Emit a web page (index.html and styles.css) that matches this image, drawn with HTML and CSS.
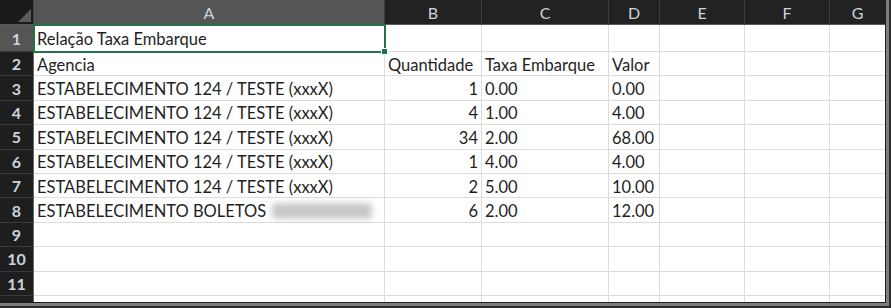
FILE: index.html
```html
<!DOCTYPE html>
<html lang="pt">
<head>
  <meta charset="UTF-8" />
  <title>Relação Taxa Embarque</title>
  <link rel="stylesheet" href="styles.css">
</head>
<body>

<div class="window">
  <div class="sheet" id="sheet">
    <!-- column headers -->
    <div class="corner">
      <svg width="34" height="25" viewBox="0 0 34 25"><polygon points="31,9 31,22 18,22" fill="#5c5c5c"/></svg>
    </div>
    <div class="col-head active">A</div>
    <div class="col-head">B</div>
    <div class="col-head">C</div>
    <div class="col-head">D</div>
    <div class="col-head">E</div>
    <div class="col-head">F</div>
    <div class="col-head">G</div>
  </div>
</div>

<script>
  const rows = [
    ["Relação Taxa Embarque", "", "", ""],
    ["Agencia", "Quantidade", "Taxa Embarque", "Valor"],
    ["ESTABELECIMENTO 124 / TESTE (xxxX)", "1", "0.00", "0.00"],
    ["ESTABELECIMENTO 124 / TESTE (xxxX)", "4", "1.00", "4.00"],
    ["ESTABELECIMENTO 124 / TESTE (xxxX)", "34", "2.00", "68.00"],
    ["ESTABELECIMENTO 124 / TESTE (xxxX)", "1", "4.00", "4.00"],
    ["ESTABELECIMENTO 124 / TESTE (xxxX)", "2", "5.00", "10.00"],
    ["ESTABELECIMENTO BOLETOS", "6", "2.00", "12.00", true],
    ["", "", "", ""],
    ["", "", "", ""],
    ["", "", "", ""],
    ["", "", "", ""]
  ];

  let sheet = document.getElementById("sheet");

  rows.forEach((row, i) => {
    let html = `<div class="row-head${i === 0 ? " active" : ""}">${i + 1}</div>`;
    let first = row[0];
    if (row[4]) first += ` <span class="hidden-text"></span>`;
    html += `<div class="cell${i === 0 ? " selected" : ""}">${first}</div>`;
    // column B is numeric (right aligned) except for the header row
    html += `<div class="cell${i > 1 ? " num" : ""}">${row[1]}</div>`;
    html += `<div class="cell">${row[2]}</div>`;
    html += `<div class="cell">${row[3]}</div>`;
    html += `<div class="cell"></div><div class="cell"></div><div class="cell"></div>`;
    sheet.insertAdjacentHTML("beforeend", html);
  });
</script>
</body>
</html>
```

FILE: styles.css
```css
body { margin: 0; background: #fff; font-family: Lato, "Open Sans", sans-serif; }
.window { width: 891px; height: 308px; box-sizing: border-box; padding: 0 3px 3px 0; background: #7d7d7d; border-right: 2px solid #2b2b2b; border-bottom: 2px solid #2b2b2b; overflow: hidden; }
.sheet { display: grid; grid-template-columns: 34px 351px 97px 127px 51px 85px 85px 56px; grid-template-rows: 25px 27px; grid-auto-rows: 24.4px; height: 303px; overflow: hidden; background: #fff; border-right: 1px solid #1e1e1e; border-bottom: 1px solid #1e1e1e; box-sizing: border-box; }

.corner { background: #1b1b1b; border-bottom: 1px solid #5a5a5a; border-right: 1px solid #444; box-sizing: border-box; }
.corner svg { display: block; }
.col-head { background: #222; color: #ccd4dc; font-size: 16px; display: flex; align-items: center; justify-content: center; border-right: 1px solid #3c3c3c; border-bottom: 1px solid #5a5a5a; box-sizing: border-box; }
.col-head.active { background: #555; }
.row-head { background: #1e1e1e; color: #ccd4dc; font-size: 16px; font-weight: bold; display: flex; align-items: center; justify-content: center; border-right: 1px solid #6a6a6a; border-bottom: 1px solid #3a3a3a; box-sizing: border-box; }
.row-head.active { background: #555; }

.cell { border-right: 1px solid #dcdcdc; border-bottom: 1px solid #dcdcdc; box-sizing: border-box; padding: 2px 3px 0; font-size: 16.5px; color: #1f1f1f; display: flex; align-items: center; white-space: nowrap; overflow: visible; }
.cell.num { justify-content: flex-end; }
.cell.selected { position: relative; outline: 2px solid #217346; outline-offset: -1px; z-index: 2; }
.cell.selected::after { content: ""; position: absolute; right: -4px; bottom: -4px; width: 5px; height: 5px; background: #217346; border: 1px solid #fff; }
.hidden-text { display: inline-block; width: 100px; height: 16px; margin-left: 6px; background: #c8c8c8; border-radius: 4px; filter: blur(3px); }
```
